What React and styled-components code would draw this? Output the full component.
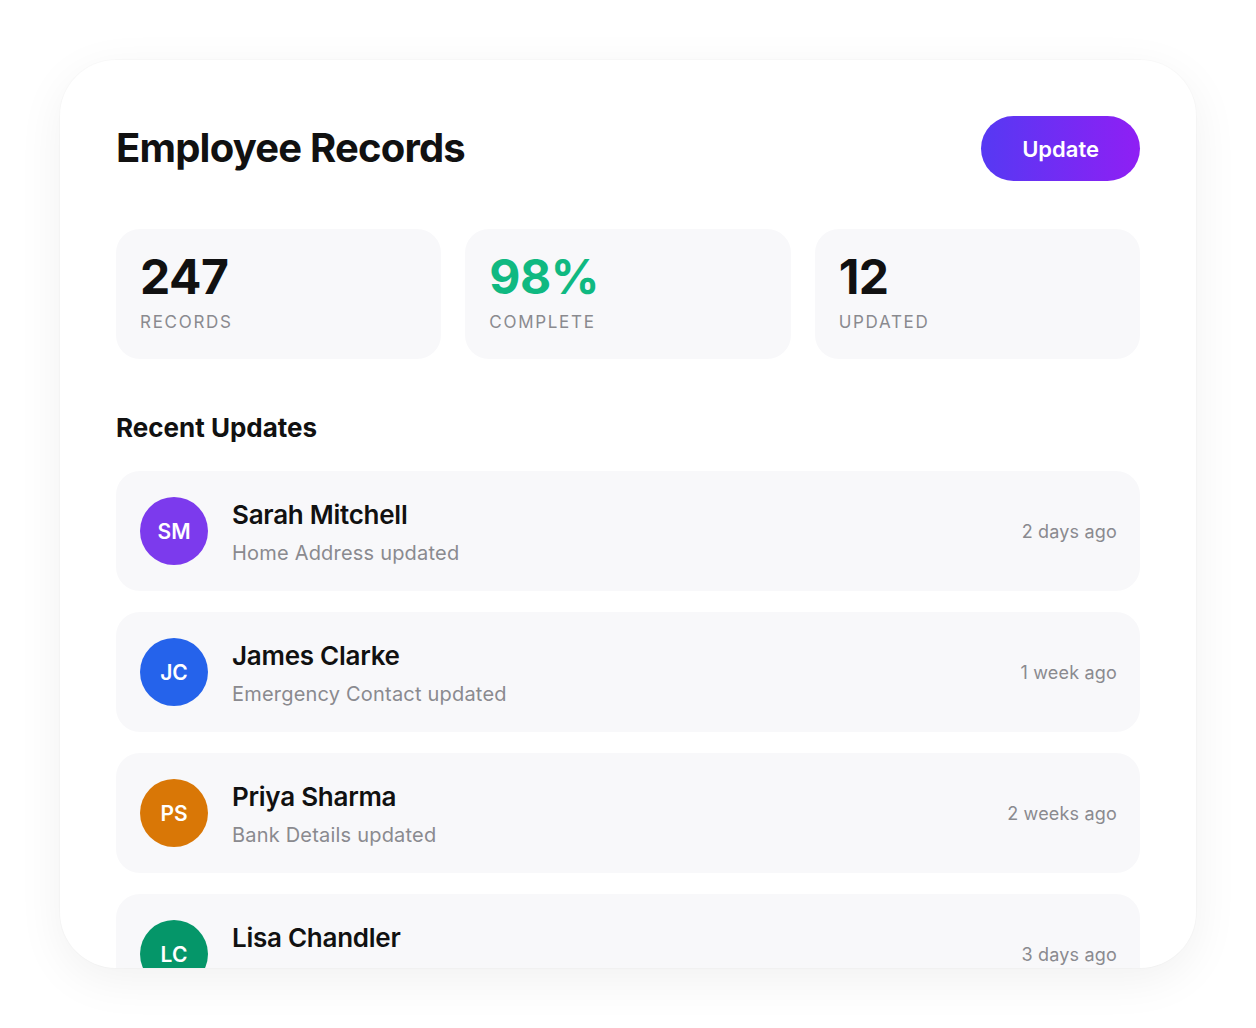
import styled, { createGlobalStyle } from 'styled-components';

const GlobalStyle = createGlobalStyle`
    * {
        box-sizing: border-box;
    }
    html, body {
        margin: 0;
        padding: 0;
        background: #ffffff;
        font-family: Inter, "Noto Sans", "Liberation Sans", sans-serif;
        color: #111111;
    }
`;

const Page = styled.div`
    height: 100vh;
    padding: 60px;
`;

const Card = styled.div`
    height: 100%;
    background: #ffffff;
    border-radius: 56px;
    box-shadow: 0 12px 48px rgba(0, 0, 0, 0.06), 0 0 0 1px rgba(0, 0, 0, 0.015);
    padding: 56px;
    overflow: hidden;
`;

const Header = styled.div`
    display: flex;
    align-items: center;
    justify-content: space-between;
    margin-bottom: 48px;
`;

const Title = styled.h1`
    margin: 0;
    font-size: 40px;
    font-weight: 700;
    letter-spacing: -0.02em;
    line-height: 1.2;
    transform: translateY(-1px);
`;

const UpdateButton = styled.button`
    height: 65px;
    padding: 0 41px;
    border: none;
    border-radius: 999px;
    background: linear-gradient(90deg, #5639f3 0%, #8f1ff4 100%);
    color: #ffffff;
    font-family: inherit;
    font-size: 22px;
    font-weight: 600;
    cursor: pointer;
`;

const Stats = styled.div`
    display: grid;
    grid-template-columns: repeat(3, 1fr);
    gap: 24px;
    margin-bottom: 53px;
`;

const StatCard = styled.div`
    height: 130px;
    background: #f8f8fa;
    border-radius: 24px;
    padding: 24px;
    display: flex;
    flex-direction: column;
    gap: 9px;
`;

const StatValue = styled.div`
    font-size: 48px;
    font-weight: 700;
    line-height: 1;
    letter-spacing: -0.01em;
    color: ${(p) => p.color || '#111111'};
`;

const StatLabel = styled.div`
    font-size: 17px;
    line-height: 1.5;
    letter-spacing: 0.1em;
    color: #8a8a8f;
    text-transform: uppercase;
`;

const SectionTitle = styled.h2`
    margin: 0 0 28px;
    font-size: 26px;
    font-weight: 700;
    line-height: 1.2;
`;

const List = styled.div`
    display: flex;
    flex-direction: column;
    gap: 21px;
`;

const Row = styled.div`
    height: 120px;
    flex-shrink: 0;
    background: #f8f8fa;
    border-radius: 24px;
    padding: 0 23px 0 24px;
    display: flex;
    align-items: center;
    gap: 24px;
`;

const Avatar = styled.div`
    width: 68px;
    height: 68px;
    border-radius: 50%;
    flex-shrink: 0;
    background: ${(p) => p.bg};
    color: #ffffff;
    display: flex;
    align-items: center;
    justify-content: center;
    font-size: 21px;
    font-weight: 600;
`;

const Info = styled.div`
    flex: 1;
    display: flex;
    flex-direction: column;
    gap: 6px;
    margin-top: 4px;
`;

const Name = styled.div`
    font-size: 26px;
    font-weight: 600;
    line-height: 1.3;
    letter-spacing: -0.01em;
`;

const Detail = styled.div`
    font-size: 20px;
    line-height: 1.5;
    color: #8a8a8f;
    letter-spacing: 0.01em;
`;

const Time = styled.div`
    font-size: 18px;
    color: #8a8a8f;
    letter-spacing: 0.01em;
`;

const stats = [
    { value: '247', label: 'Records' },
    { value: '98%', label: 'Complete', color: '#10b981' },
    { value: '12', label: 'Updated' },
];

const updates = [
    { initials: 'SM', name: 'Sarah Mitchell', detail: 'Home Address updated', time: '2 days ago', bg: '#7c3aed' },
    { initials: 'JC', name: 'James Clarke', detail: 'Emergency Contact updated', time: '1 week ago', bg: '#2563eb' },
    { initials: 'PS', name: 'Priya Sharma', detail: 'Bank Details updated', time: '2 weeks ago', bg: '#d97706' },
    { initials: 'LC', name: 'Lisa Chandler', detail: 'Job Title updated', time: '3 days ago', bg: '#059669' },
];

const App = () => {
    return (
        <>
            <GlobalStyle />
            <Page>
                <Card>
                    <Header>
                        <Title>Employee Records</Title>
                        <UpdateButton>Update</UpdateButton>
                    </Header>
                    <Stats>
                        {stats.map((s) => (
                            <StatCard key={s.label}>
                                <StatValue color={s.color}>{s.value}</StatValue>
                                <StatLabel>{s.label}</StatLabel>
                            </StatCard>
                        ))}
                    </Stats>
                    <SectionTitle>Recent Updates</SectionTitle>
                    <List>
                        {updates.map((u) => (
                            <Row key={u.initials}>
                                <Avatar bg={u.bg}>{u.initials}</Avatar>
                                <Info>
                                    <Name>{u.name}</Name>
                                    <Detail>{u.detail}</Detail>
                                </Info>
                                <Time>{u.time}</Time>
                            </Row>
                        ))}
                    </List>
                </Card>
            </Page>
        </>
    );
};

export default App;
